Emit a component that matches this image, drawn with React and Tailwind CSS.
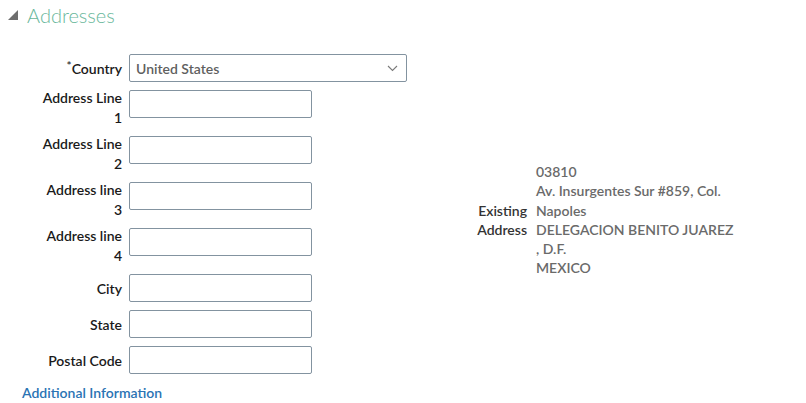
import React from "react";

const font = { fontFamily: '"Segoe UI", Lato, "Open Sans", sans-serif' };

function Row({ label, twoLine, children, required }) {
  return (
    <div className="flex items-start gap-[7px]">
      <div
        className={
          "w-[122px] shrink-0 text-right text-[14px] font-semibold text-[#1a1a1a] " +
          (twoLine ? "-mt-[2px] leading-[20px]" : "pt-[5px] leading-[19px]")
        }
      >
        {required && <span className="text-[#333] align-top text-[12px] leading-[14px]">*</span>}
        {label}
      </div>
      {children}
    </div>
  );
}

function TextInput({ wide }) {
  return (
    <div
      className={
        "h-[28px] shrink-0 rounded-[2px] border border-[#8393a0] bg-white " +
        (wide ? "w-[278px]" : "w-[183px]")
      }
    />
  );
}

export default function App() {
  return (
    <div className="w-[806px] h-[403px] bg-white overflow-hidden" style={font}>
      <div className="flex items-center h-[30px] pl-[8px]">
        <svg width="10" height="10" viewBox="0 0 10 10" className="mr-[9px] mt-[-1px]">
          <polygon points="10,0 10,10 0,10" fill="#6e6e6e" />
        </svg>
        <span className="text-[20px] font-light leading-none text-[#69b79b]">Addresses</span>
      </div>
      <div className="flex items-start">
        <div className="flex flex-col gap-[8px] pt-[24px] w-[420px] shrink-0">
          <Row label="Country" required>
            <div className="h-[28px] w-[278px] shrink-0 rounded-[2px] border border-[#8393a0] bg-white flex items-center justify-between pl-[6px] pr-[8px]">
              <span className="text-[14px] font-semibold text-[#5f5f5f]">United States</span>
              <svg width="11" height="7" viewBox="0 0 11 7">
                <polyline points="1,1 5.5,5.5 10,1" fill="none" stroke="#7a7a7a" strokeWidth="1.1" />
              </svg>
            </div>
          </Row>
          <Row label={<>Address Line<br />1</>} twoLine>
            <TextInput />
          </Row>
          <Row label={<>Address Line<br />2</>} twoLine>
            <TextInput />
          </Row>
          <Row label={<>Address line<br />3</>} twoLine>
            <TextInput />
          </Row>
          <Row label={<>Address line<br />4</>} twoLine>
            <TextInput />
          </Row>
          <Row label="City">
            <TextInput />
          </Row>
          <Row label="State">
            <TextInput />
          </Row>
          <Row label="Postal Code">
            <TextInput />
          </Row>
          <div className="pl-[22px] pt-[1px] text-[14px] font-semibold leading-[19px] text-[#2a73b3]">
            Additional Information
          </div>
        </div>
        <div className="flex items-center gap-[9px] mt-[132px]">
          <div className="w-[107px] text-right text-[14px] font-semibold leading-[19.3px] text-[#333]">
            Existing
            <br />
            Address
          </div>
          <div className="text-[14px] font-semibold leading-[19.3px] text-[#6a6a6a]">
            03810
            <br />
            Av. Insurgentes Sur #859, Col.
            <br />
            Napoles
            <br />
            DELEGACION BENITO JUAREZ
            <br />
            , D.F.
            <br />
            MEXICO
          </div>
        </div>
      </div>
    </div>
  );
}
